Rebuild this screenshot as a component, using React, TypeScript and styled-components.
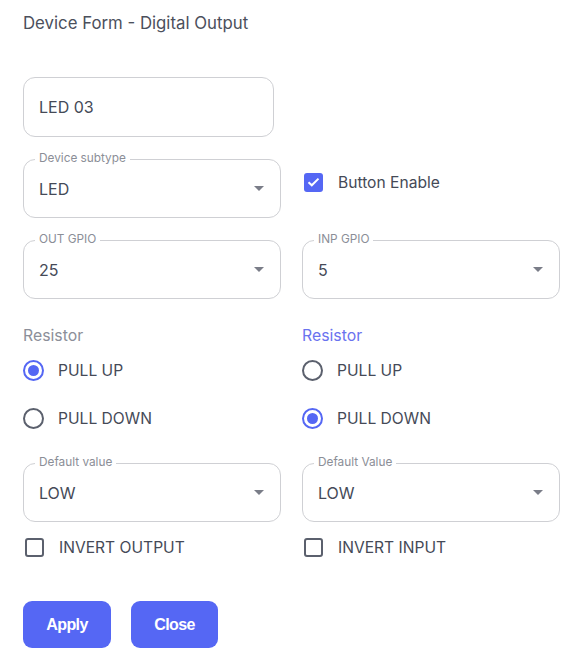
import React from "react";
import styled, { createGlobalStyle } from "styled-components";

const Global = createGlobalStyle`
  html, body { margin: 0; padding: 0; background: #ffffff; }
  body { font-family: Inter, "Noto Sans", sans-serif; }
`;

const BLUE = "#5567f4";

const Page = styled.div`
  width: 584px;
  height: 660px;
  box-sizing: border-box;
  padding: 12px 25px 0 23px;
  display: flex;
  flex-direction: column;
`;

const Title = styled.div`
  font-size: 16.8px;
  color: #4b505c;
  line-height: 22px;
  height: 22px;
`;

const Grid = styled.div`
  display: grid;
  grid-template-columns: 258px 258px;
  column-gap: 21px;
  align-items: center;
`;

const TextBox = styled.div`
  width: 251px;
  height: 60px;
  box-sizing: border-box;
  border: 1px solid #cfd0d4;
  border-radius: 12px;
  display: flex;
  align-items: center;
  padding-left: 15px;
  font-size: 16px;
  color: #454a57;
  margin-top: 43px;
`;

const SelectBox = styled.div`
  position: relative;
  height: 59px;
  box-sizing: border-box;
  border: 1px solid #cfd0d4;
  border-radius: 12px;
  display: flex;
  align-items: center;
  justify-content: space-between;
  padding: 0 16px 0 15px;
  font-size: 16px;
  color: #454a57;
`;

const Legend = styled.span`
  position: absolute;
  left: 11px;
  top: -9px;
  padding: 0 4px;
  background: #fff;
  font-size: 11.8px;
  line-height: 15px;
  color: #8b8e97;
`;

const Caret = styled.span`
  width: 0;
  height: 0;
  border-left: 5px solid transparent;
  border-right: 5px solid transparent;
  border-top: 5px solid #7a7d88;
`;

const Row = styled.div<{ $mt: number }>`
  margin-top: ${(p) => p.$mt}px;
`;

const CheckRow = styled.label<{ $up?: boolean }>`
  display: flex;
  align-items: center;
  gap: 15px;
  font-size: 15.6px;
  color: #454a57;
  height: 22px;
  ${(p) => (p.$up ? "align-self: start; margin-top: 12px;" : "")}
`;

const Box = styled.span<{ $checked?: boolean }>`
  width: 19px;
  height: 19px;
  box-sizing: border-box;
  border-radius: 3px;
  border: ${(p) => (p.$checked ? "none" : "2px solid #5b606d")};
  background: ${(p) => (p.$checked ? BLUE : "transparent")};
  display: flex;
  align-items: center;
  justify-content: center;
  margin-left: 2px;
`;

const GroupLabel = styled.div<{ $active?: boolean }>`
  font-size: 15.8px;
  line-height: 20px;
  color: ${(p) => (p.$active ? "#6a73ef" : "#8c8f99")};
`;

const RadioRow = styled.div<{ $mt: number }>`
  display: flex;
  align-items: center;
  gap: 14px;
  height: 22px;
  margin-top: ${(p) => p.$mt}px;
  font-size: 15.6px;
  color: #454a57;
`;

const RadioCircle = styled.span<{ $on?: boolean }>`
  width: 21px;
  height: 21px;
  box-sizing: border-box;
  border-radius: 50%;
  border: 2px solid ${(p) => (p.$on ? BLUE : "#5b606d")};
  display: flex;
  align-items: center;
  justify-content: center;
  &::after {
    content: "";
    width: 11px;
    height: 11px;
    border-radius: 50%;
    background: ${(p) => (p.$on ? BLUE : "transparent")};
  }
`;

const Col = styled.div`
  display: flex;
  flex-direction: column;
`;

const Buttons = styled.div`
  display: flex;
  gap: 20px;
  margin-top: 43px;
`;

const Button = styled.button<{ $w: number }>`
  width: ${(p) => p.$w}px;
  height: 47px;
  border: none;
  border-radius: 9px;
  background: ${BLUE};
  color: #ffffff;
  font-family: "Liberation Sans", Arial, sans-serif;
  font-weight: 700;
  font-size: 16px;
  letter-spacing: -0.6px;
  padding: 0;
`;

const Select = ({ label, value }: { label: string; value: string }) => (
  <SelectBox>
    <Legend>{label}</Legend>
    <span>{value}</span>
    <Caret />
  </SelectBox>
);

const Check = ({
  checked,
  up,
  children,
}: {
  checked?: boolean;
  up?: boolean;
  children: React.ReactNode;
}) => (
  <CheckRow $up={up}>
    <Box $checked={checked}>
      {checked && (
        <svg width="13" height="10" viewBox="0 0 13 10">
          <path d="M1.5 5.2 L4.8 8.3 L11.5 1.6" stroke="#fff" strokeWidth="2" fill="none" />
        </svg>
      )}
    </Box>
    {children}
  </CheckRow>
);

const Radio = ({ on, label, mt }: { on?: boolean; label: string; mt: number }) => (
  <RadioRow $mt={mt}>
    <RadioCircle $on={on} />
    {label}
  </RadioRow>
);

export default function App() {
  return (
    <Page>
      <Global />
      <Title>Device Form - Digital Output</Title>
      <TextBox>LED 03</TextBox>
      <Row $mt={22}>
        <Grid>
          <Select label="Device subtype" value="LED" />
          <Check checked up>
            Button Enable
          </Check>
        </Grid>
      </Row>
      <Row $mt={22}>
        <Grid>
          <Select label="OUT GPIO" value="25" />
          <Select label="INP GPIO" value="5" />
        </Grid>
      </Row>
      <Row $mt={27}>
        <Grid>
          <Col>
            <GroupLabel>Resistor</GroupLabel>
            <Radio on label="PULL UP" mt={13} />
            <Radio label="PULL DOWN" mt={26} />
          </Col>
          <Col>
            <GroupLabel $active>Resistor</GroupLabel>
            <Radio label="PULL UP" mt={13} />
            <Radio on label="PULL DOWN" mt={26} />
          </Col>
        </Grid>
      </Row>
      <Row $mt={34}>
        <Grid>
          <Select label="Default value" value="LOW" />
          <Select label="Default Value" value="LOW" />
        </Grid>
      </Row>
      <Row $mt={14}>
        <Grid>
          <Check>INVERT OUTPUT</Check>
          <Check>INVERT INPUT</Check>
        </Grid>
      </Row>
      <Buttons>
        <Button $w={88}>Apply</Button>
        <Button $w={87}>Close</Button>
      </Buttons>
    </Page>
  );
}
